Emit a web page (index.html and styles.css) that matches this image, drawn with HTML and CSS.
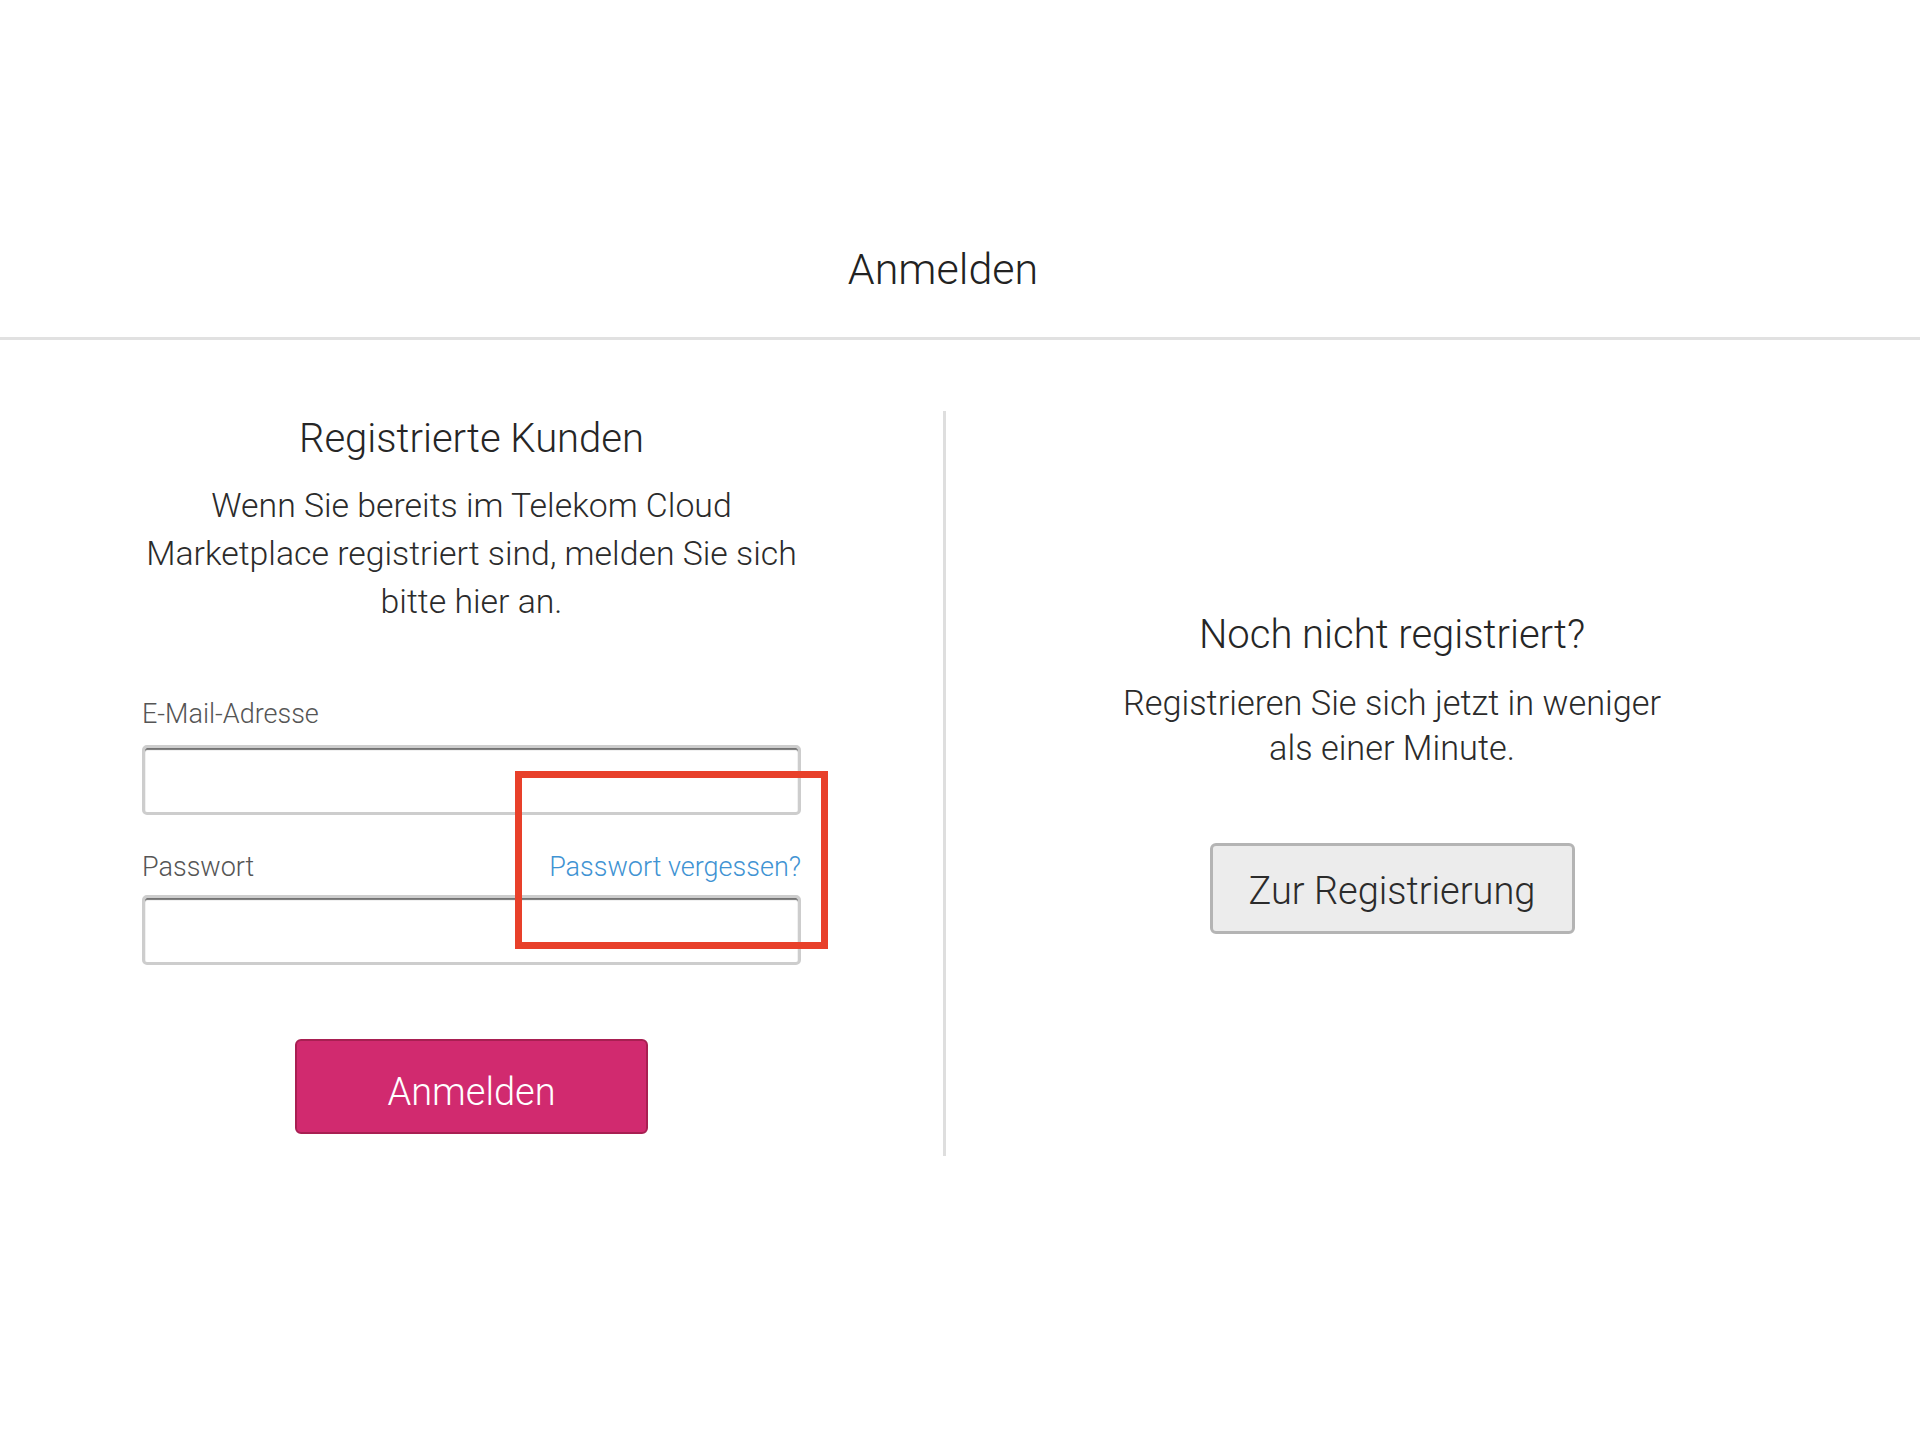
FILE: index.html
```html
<!DOCTYPE html>
<html lang="de">
<head>
<meta charset="utf-8">
<title>Anmelden</title>
<link rel="stylesheet" href="styles.css">
</head>
<body>
<header class="page-head">
  <h1 class="page-title">Anmelden</h1>
</header>
<div class="rule"></div>
<main class="columns">
  <section class="col col-login">
    <div class="login-inner">
      <h2 class="col-title">Registrierte Kunden</h2>
      <p class="col-text">Wenn Sie bereits im Telekom Cloud<br>Marketplace registriert sind, melden Sie sich<br>bitte hier an.</p>
      <form class="login-form">
        <label class="field-label label-email" for="email">E-Mail-Adresse</label>
        <input class="field-input" id="email" type="text">
        <div class="label-row">
          <label class="field-label" for="pw">Passwort</label>
          <a class="forgot" href="#">Passwort vergessen?</a>
        </div>
        <input class="field-input" id="pw" type="password">
        <div class="submit-row">
          <button class="btn-primary" type="button">Anmelden</button>
        </div>
      </form>
    </div>
  </section>
  <div class="divider"></div>
  <section class="col col-register">
    <h2 class="col-title">Noch nicht registriert?</h2>
    <p class="col-text reg-text">Registrieren Sie sich jetzt in weniger<br>als einer Minute.</p>
    <button class="btn-secondary" type="button">Zur Registrierung</button>
  </section>
</main>
<div class="annotation"></div>
</body>
</html>
```

FILE: styles.css
```css
* { box-sizing: border-box; }

html, body {
  margin: 0;
  padding: 0;
  background: #ffffff;
}

body {
  font-family: Roboto, "Liberation Sans", sans-serif;
  font-weight: 300;
  color: #262626;
  width: 1920px;
  min-height: 1440px;
  position: relative;
}

.page-head {
  width: 1886px;
  text-align: center;
  padding: 244px 0 41px;
}

.page-title {
  margin: 0;
  font-size: 43px;
  line-height: 1.2;
  font-weight: 300;
  color: #222;
}

.rule {
  height: 3px;
  background: #e1e1e1;
}

.columns {
  display: flex;
  margin-top: 71px;
}

.col {
  text-align: center;
}

.col-login {
  width: 943px;
  padding: 4px 0 22px;
}

.login-inner {
  width: 659px;
  margin: 0 auto;
}

.divider {
  width: 3px;
  background: #dedede;
}

.col-register {
  width: 892px;
  padding-top: 200px;
  display: flex;
  flex-direction: column;
  align-items: center;
}

.col-title {
  margin: 0;
  font-size: 40px;
  line-height: 48px;
  font-weight: 300;
  color: #262626;
}

.col-text {
  margin: 19px 0 0;
  font-size: 33.8px;
  line-height: 48px;
  color: #2b2b2b;
  white-space: nowrap;
}

.reg-text {
  margin-top: 22px;
  font-size: 34.3px;
  line-height: 45px;
}

.login-form {
  margin-top: 72px;
  text-align: left;
}

.field-label {
  display: block;
  font-size: 27px;
  line-height: 32px;
  color: #555;
}

.label-email {
  margin-bottom: 15px;
}

.field-input {
  display: block;
  width: 659px;
  height: 70px;
  border: 3px solid #cdcdcd;
  border-radius: 5px;
  box-shadow: inset 0 2px 1px rgba(0, 0, 0, 0.55);
  background: #fff;
  font-size: 27px;
  outline: none;
}

.label-row {
  display: flex;
  justify-content: space-between;
  align-items: baseline;
  margin: 36px 0 12px;
}

.forgot {
  font-size: 27px;
  line-height: 32px;
  color: #3f93d3;
  text-decoration: none;
}

.submit-row {
  display: flex;
  justify-content: center;
  margin-top: 74px;
}

.btn-primary {
  width: 353px;
  height: 95px;
  background: #d12a6f;
  border: 2px solid #a81f52;
  border-radius: 6px;
  color: #fff;
  font-family: Roboto, "Liberation Sans", sans-serif;
  font-weight: 300;
  font-size: 38px;
  padding: 12px 0 0;
}

.btn-secondary {
  margin-top: 72px;
  width: 365px;
  height: 91px;
  background: #ececec;
  border: 3px solid #b4b4b4;
  border-radius: 6px;
  color: #2b2b2b;
  font-family: Roboto, "Liberation Sans", sans-serif;
  font-weight: 300;
  font-size: 38px;
  padding: 6px 0 0;
}

.annotation {
  position: absolute;
  left: 515px;
  top: 771px;
  width: 313px;
  height: 178px;
  border: 7px solid #e8402a;
  pointer-events: none;
}
```
